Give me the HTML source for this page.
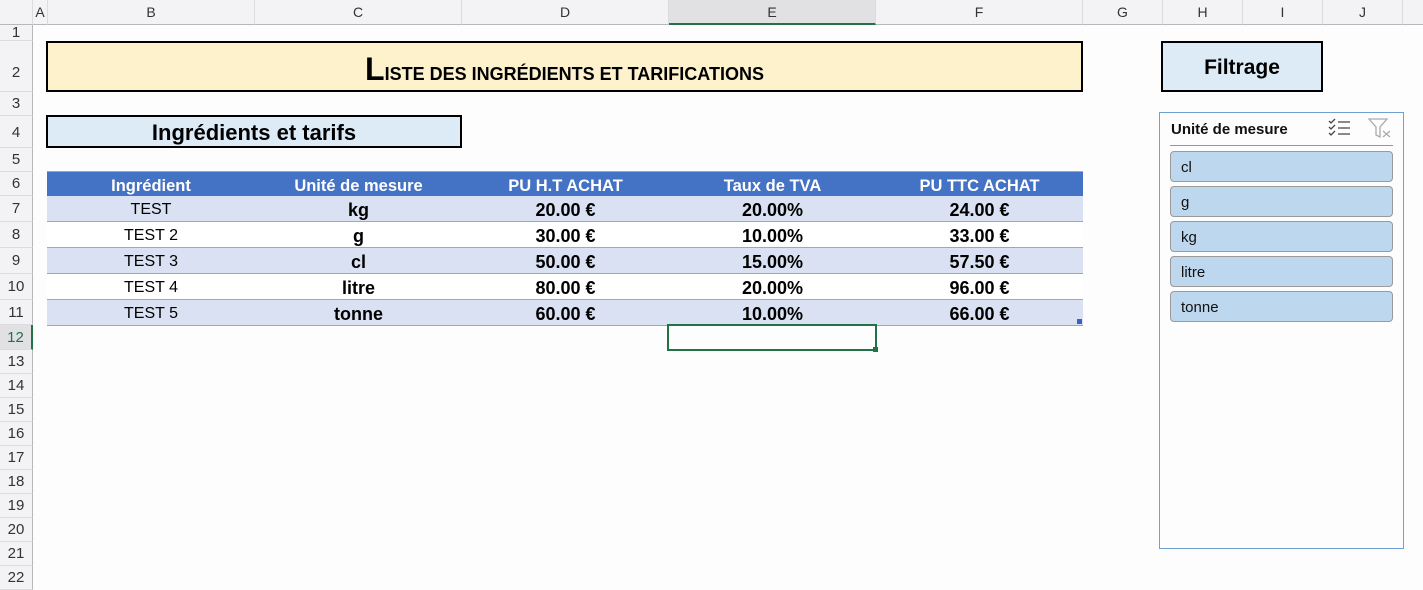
<!DOCTYPE html>
<html><head><meta charset="utf-8"><style>
*{margin:0;padding:0;box-sizing:border-box}
body{width:1423px;height:576px;background:#fcfdfc;font-family:"Liberation Sans",sans-serif;position:relative;overflow:hidden}
.a{position:absolute}
.ch{position:absolute;top:0;height:25px;background:#f3f2f5;border-right:1px solid #dcdbe0;border-bottom:1px solid #b8b8bc;font-size:14px;color:#333;text-align:center;line-height:25px}
.rh{position:absolute;left:0;width:33px;background:#f3f2f5;border-bottom:1px solid #dcdbe0;border-right:1px solid #b8b8bc;font-size:15px;color:#333;text-align:center}
.tr{position:absolute;left:47px;width:1036px;display:flex;font-size:18px;font-weight:bold;color:#000}
.tr div{text-align:center;padding-top:2px}
.tr div.n{font-weight:normal;font-size:16px}
.c1{width:208px}.c2{width:207px}
.it{position:absolute;left:1170px;width:223px;height:31px;background:#bdd7ee;border:1px solid #9a9a9a;border-radius:4px;font-size:15px;line-height:31px;padding-left:10px;color:#111}
</style></head><body>
<div class="ch" style="left:0;width:33px"></div>
<div class="ch" style="left:33px;width:15px">A</div>
<div class="ch" style="left:48px;width:207px">B</div>
<div class="ch" style="left:255px;width:207px">C</div>
<div class="ch" style="left:462px;width:207px">D</div>
<div class="ch" style="left:669px;width:207px;background:#e1e1e3;border-bottom:2px solid #217346">E</div>
<div class="ch" style="left:876px;width:207px">F</div>
<div class="ch" style="left:1083px;width:80px">G</div>
<div class="ch" style="left:1163px;width:80px">H</div>
<div class="ch" style="left:1243px;width:80px">I</div>
<div class="ch" style="left:1323px;width:80px">J</div>
<div class="ch" style="left:1403px;width:20px;border-right:none"></div>

<div class="rh" style="top:25px;height:16px;line-height:16px">1</div>
<div class="rh" style="top:41px;height:51px;line-height:64px">2</div>
<div class="rh" style="top:92px;height:24px;line-height:24px">3</div>
<div class="rh" style="top:116px;height:32px;line-height:34px">4</div>
<div class="rh" style="top:148px;height:24px;line-height:24px">5</div>
<div class="rh" style="top:172px;height:24px;line-height:24px">6</div>
<div class="rh" style="top:196px;height:26px;line-height:26px">7</div>
<div class="rh" style="top:222px;height:26px;line-height:26px">8</div>
<div class="rh" style="top:248px;height:26px;line-height:26px">9</div>
<div class="rh" style="top:274px;height:26px;line-height:26px">10</div>
<div class="rh" style="top:300px;height:25px;line-height:25px">11</div>
<div class="rh" style="top:325px;height:25px;line-height:25px;background:#e1e1e3;color:#217346;border-right:2px solid #217346">12</div>
<div class="rh" style="top:350px;height:24px;line-height:24px">13</div>
<div class="rh" style="top:374px;height:24px;line-height:24px">14</div>
<div class="rh" style="top:398px;height:24px;line-height:24px">15</div>
<div class="rh" style="top:422px;height:24px;line-height:24px">16</div>
<div class="rh" style="top:446px;height:24px;line-height:24px">17</div>
<div class="rh" style="top:470px;height:24px;line-height:24px">18</div>
<div class="rh" style="top:494px;height:24px;line-height:24px">19</div>
<div class="rh" style="top:518px;height:24px;line-height:24px">20</div>
<div class="rh" style="top:542px;height:24px;line-height:24px">21</div>
<div class="rh" style="top:566px;height:24px;line-height:24px">22</div>

<div class="a" style="left:46px;top:41px;width:1037px;height:51px;background:#fdf2cc;border:2px solid #000;text-align:center;font-weight:bold;font-size:18px;line-height:52px">
<span style="font-size:32px">L</span>ISTE DES INGRÉDIENTS ET TARIFICATIONS</div>
<div class="a" style="left:46px;top:115px;width:416px;height:33px;background:#ddebf7;border:2px solid #000;text-align:center;font-weight:bold;font-size:22px;line-height:31px">Ingrédients et tarifs</div>
<div class="a" style="left:1161px;top:41px;width:162px;height:51px;background:#ddebf7;border:2px solid #000;text-align:center;font-weight:bold;font-size:21px;line-height:50px">Filtrage</div>

<div class="a" style="left:47px;top:171px;width:1036px;height:155px;border:1px solid #8ea9db"></div>
<div class="tr" style="top:172px;height:24px;line-height:24px;background:#4472c4;color:#fff;font-size:16.5px"><div class="c1">Ingrédient</div><div class="c2">Unité de mesure</div><div class="c2">PU H.T ACHAT</div><div class="c2">Taux de TVA</div><div class="c2">PU TTC ACHAT</div></div>
<div class="tr" style="top:196px;height:26px;line-height:24px;background:#d9e1f2;border-bottom:1px solid #8ea9db"><div class="c1 n">TEST</div><div class="c2">kg</div><div class="c2">20.00 €</div><div class="c2">20.00%</div><div class="c2">24.00 €</div></div>
<div class="tr" style="top:222px;height:26px;line-height:24px;background:#fff;border-bottom:1px solid #8ea9db"><div class="c1 n">TEST 2</div><div class="c2">g</div><div class="c2">30.00 €</div><div class="c2">10.00%</div><div class="c2">33.00 €</div></div>
<div class="tr" style="top:248px;height:26px;line-height:24px;background:#d9e1f2;border-bottom:1px solid #8ea9db"><div class="c1 n">TEST 3</div><div class="c2">cl</div><div class="c2">50.00 €</div><div class="c2">15.00%</div><div class="c2">57.50 €</div></div>
<div class="tr" style="top:274px;height:26px;line-height:24px;background:#fff;border-bottom:1px solid #8ea9db"><div class="c1 n">TEST 4</div><div class="c2">litre</div><div class="c2">80.00 €</div><div class="c2">20.00%</div><div class="c2">96.00 €</div></div>
<div class="tr" style="top:300px;height:25px;line-height:24px;background:#d9e1f2"><div class="c1 n">TEST 5</div><div class="c2">tonne</div><div class="c2">60.00 €</div><div class="c2">10.00%</div><div class="c2">66.00 €</div></div>
<div class="a" style="left:1077px;top:319px;width:5px;height:5px;background:#4060c0"></div>

<div class="a" style="left:667px;top:324px;width:210px;height:27px;border:2px solid #217346"></div>
<div class="a" style="left:873px;top:347px;width:5px;height:5px;background:#217346"></div>

<div class="a" style="left:1159px;top:112px;width:245px;height:437px;border:1px solid #6fa0d4;background:#fcfdfc"></div>
<div class="a" style="left:1171px;top:121px;font-size:15px;font-weight:bold;color:#111">Unité de mesure</div>
<div class="a" style="left:1170px;top:145px;width:223px;height:1px;background:#6fa0d4"></div>
<svg class="a" style="left:1328px;top:118px" width="24" height="20" viewBox="0 0 24 20" fill="none" stroke="#444" stroke-width="1.3"><path d="M1 3l2 2 4-4M1 9l2 2 4-4M1 15l2 2 4-4M10 4h12M10 10h12M10 16h12"/></svg>
<svg class="a" style="left:1368px;top:118px" width="24" height="20" viewBox="0 0 24 20" fill="none" stroke="#aaa" stroke-width="1.3"><path d="M1 1h18l-7 8v10l-4-2V9z M15 13l7 6M22 13l-7 6"/></svg>
<div class="it" style="top:151px">cl</div>
<div class="it" style="top:186px">g</div>
<div class="it" style="top:221px">kg</div>
<div class="it" style="top:256px">litre</div>
<div class="it" style="top:291px">tonne</div>
</body></html>
